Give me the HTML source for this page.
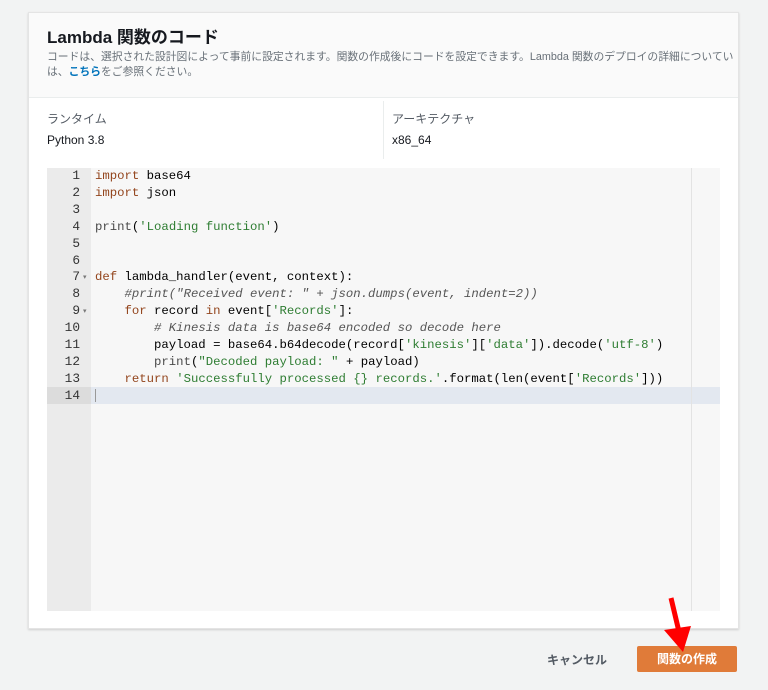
<!DOCTYPE html>
<html><head><meta charset="utf-8"><style>
body{margin:0;width:768px;height:690px;background:#f2f3f3;font-family:"Liberation Sans","Noto Sans CJK JP",sans-serif;position:relative;overflow:hidden}
.card{position:absolute;left:28px;top:12px;width:709px;height:615px;background:#fff;border:1px solid #e4e4e4;box-shadow:0 1px 2px rgba(0,0,0,.15)}
.hd{position:absolute;left:0;top:0;width:709px;height:84px;background:#fafafa;border-bottom:1px solid #eaeded}
.t{position:absolute;left:18px;top:15px;font-size:17px;font-weight:bold;color:#16191f;line-height:20px}
.d{position:absolute;left:18px;top:37px;font-size:10.8px;color:#687078;line-height:15px;width:692px}
.d a{color:#0073bb;font-weight:bold}
.lab{position:absolute;font-size:12px;color:#545b64}
.val{position:absolute;font-size:12px;color:#16191f}
.ed{position:absolute;left:18px;top:155px;width:673px;height:443px;background:#fff}
.gut{position:absolute;left:0;top:0;width:44px;height:443px;background:#ebebeb}
.code{position:absolute;left:0;top:0;font-family:"Liberation Mono",monospace;font-size:12.3px;line-height:16.9px;color:#000;white-space:pre}
.ln{position:absolute;left:0;width:33px;text-align:right;font-family:"Liberation Mono",monospace;font-size:12.8px;line-height:16.9px;color:#333;white-space:pre}
.k{color:#93451d}.s{color:#2e7d32}.c{color:#555;font-style:italic}.f{color:#4a4a4a}
</style></head><body>
<div class="card">
 <div class="hd">
  <div class="t">Lambda 関数のコード</div>
  <div class="d">コードは、選択された設計図によって事前に設定されます。関数の作成後にコードを設定できます。Lambda 関数のデプロイの詳細についてい<br>は、<a>こちら</a>をご参照ください。</div>
 </div>
 <div class="lab" style="left:18px;top:97px">ランタイム</div>
 <div class="val" style="left:18px;top:120px">Python 3.8</div>
 <div style="position:absolute;left:354px;top:88px;width:1px;height:58px;background:#eaeded"></div>
 <div class="lab" style="left:363px;top:97px">アーキテクチャ</div>
 <div class="val" style="left:363px;top:120px">x86_64</div>
 <div class="ed">
  <div class="gut"></div>
  <div style="position:absolute;left:44px;top:0;width:629px;height:443px;background:#f7f7f7"></div>
  <div style="position:absolute;left:0;top:219px;width:44px;height:17px;background:#dcdcdc"></div>
  <div style="position:absolute;left:44px;top:219px;width:629px;height:17px;background:#e3e8f0"></div>
  <div style="position:absolute;left:644px;top:0;width:1px;height:443px;background:#e3e3e3"></div>
  <div style="position:absolute;left:48px;top:221px;width:1px;height:13px;background:#999"></div>
  <div class="ln" style="top:0">1
2
3
4
5
6
7
8
9
10
11
12
13
14</div>
  <div style="position:absolute;left:36px;top:105px;font-size:7px;color:#777">▾</div>
  <div style="position:absolute;left:36px;top:139px;font-size:7px;color:#777">▾</div>
  <div class="code" style="left:48px"><span class="k">import</span> base64
<span class="k">import</span> json

<span class="f">print</span>(<span class="s">'Loading function'</span>)


<span class="k">def</span> lambda_handler(event, context):
    <span class="c">#print("Received event: " + json.dumps(event, indent=2))</span>
    <span class="k">for</span> record <span class="k">in</span> event[<span class="s">'Records'</span>]:
        <span class="c"># Kinesis data is base64 encoded so decode here</span>
        payload = base64.b64decode(record[<span class="s">'kinesis'</span>][<span class="s">'data'</span>]).decode(<span class="s">'utf-8'</span>)
        <span class="f">print</span>(<span class="s">"Decoded payload: "</span> + payload)
    <span class="k">return</span> <span class="s">'Successfully processed {} records.'</span>.format(len(event[<span class="s">'Records'</span>]))
</div>
 </div>
</div>
<div style="position:absolute;left:547px;top:651px;font-size:12px;font-weight:bold;color:#545b64">キャンセル</div>
<div style="position:absolute;left:637px;top:646px;width:100px;height:26px;background:#e07b39;border-radius:2px;color:#fff;font-size:12px;font-weight:bold;text-align:center;line-height:26px">関数の作成</div>
<svg style="position:absolute;left:0;top:0" width="768" height="690"><path d="M671 598 L680 636" stroke="#f00" stroke-width="5"/><path d="M664 630 L683 652 L691 626 Z" fill="#f00"/></svg>
</body></html>
